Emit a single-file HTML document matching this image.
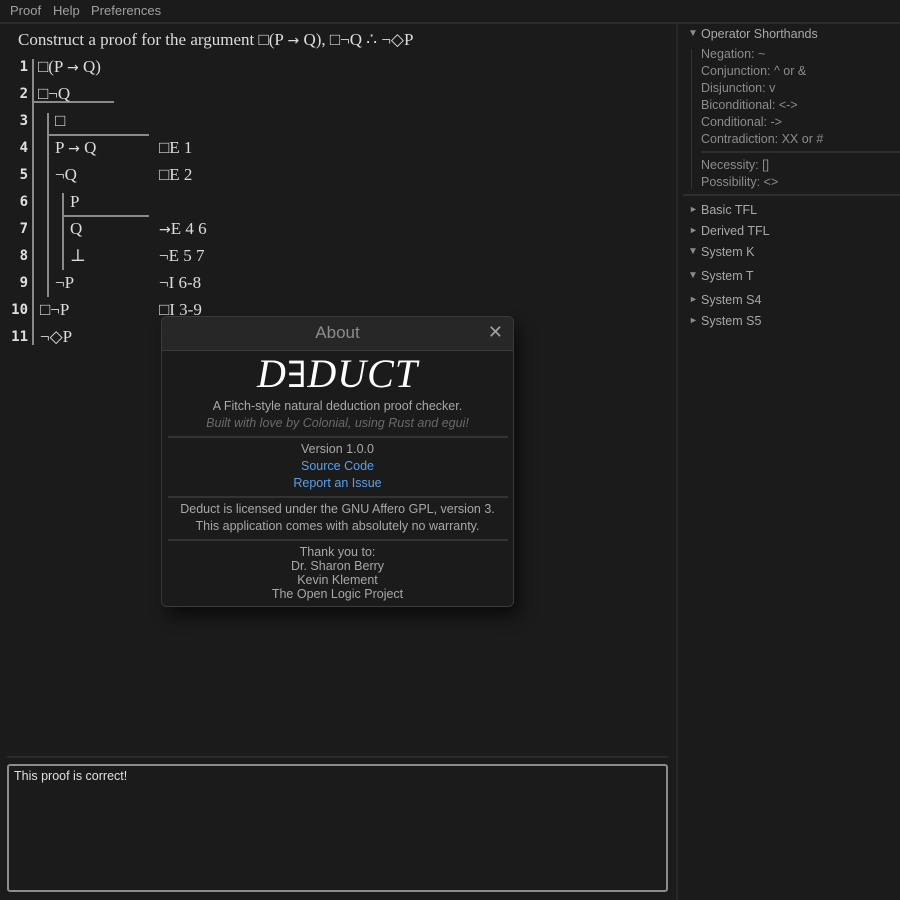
<!DOCTYPE html>
<html><head><meta charset="utf-8"><style>
*{margin:0;padding:0;box-sizing:border-box}
body{width:900px;height:900px;background:#1b1b1b;position:relative;overflow:hidden;font-family:"Liberation Sans","DejaVu Sans",sans-serif;color:#a8a8a8}
.a{position:absolute;white-space:nowrap}
.ser{font-family:"Liberation Serif","DejaVu Serif",serif;color:#dcdcdc;font-size:17px}
.ar{font-family:"DejaVu Sans",sans-serif;font-size:14px}
.num{font-family:"DejaVu Sans Mono","Liberation Mono",monospace;color:#e0e0e0;font-size:14px;font-weight:bold;text-align:right;width:24px;left:4px}
.v{position:absolute;background:#8a8a8a;width:2px}
.h{position:absolute;background:#8a8a8a;height:2px}
.ui{font-size:13px;color:#a0a0a0}
.rp div{position:absolute;font-size:12.5px;color:#8c8c8c;white-space:nowrap}
.dl{text-align:center;width:100%;position:absolute;font-size:12.5px;color:#a8a8a8}
</style></head><body>
<div class="a ui" style="left:10px;top:3px">Proof</div>
<div class="a ui" style="left:53px;top:3px">Help</div>
<div class="a ui" style="left:91px;top:3px">Preferences</div>
<div style="position:absolute;left:0;top:22px;width:900px;height:2px;background:#2c2c2c"></div>
<div style="position:absolute;left:676px;top:24px;width:2px;height:876px;background:#262626"></div>

<div class="a ser" style="left:18px;top:30px">Construct a proof for the argument □(P <span class="ar">→</span> Q), □¬Q ∴ ¬◇P</div>

<div class="a num" style="top:59px">1</div><div class="a num" style="top:86px">2</div><div class="a num" style="top:113px">3</div><div class="a num" style="top:140px">4</div><div class="a num" style="top:167px">5</div><div class="a num" style="top:194px">6</div><div class="a num" style="top:221px">7</div><div class="a num" style="top:248px">8</div><div class="a num" style="top:275px">9</div><div class="a num" style="top:302px">10</div><div class="a num" style="top:329px">11</div>

<div class="v" style="left:32px;top:59px;height:286px"></div>
<div class="h" style="left:32px;top:101px;width:82px"></div>
<div class="v" style="left:47px;top:113px;height:184px"></div>
<div class="h" style="left:47px;top:134px;width:102px"></div>
<div class="v" style="left:62px;top:193px;height:77px"></div>
<div class="h" style="left:62px;top:215px;width:87px"></div>

<div class="a ser" style="left:38px;top:57px">□(P <span class="ar">→</span> Q)</div>
<div class="a ser" style="left:38px;top:84px">□¬Q</div>
<div class="a ser" style="left:55px;top:111px">□</div>
<div class="a ser" style="left:55px;top:138px">P <span class="ar">→</span> Q</div>
<div class="a ser" style="left:55px;top:165px">¬Q</div>
<div class="a ser" style="left:70px;top:192px">P</div>
<div class="a ser" style="left:70px;top:219px">Q</div>
<div class="a ser" style="left:70px;top:246px">⊥</div>
<div class="a ser" style="left:55px;top:273px">¬P</div>
<div class="a ser" style="left:40px;top:300px">□¬P</div>
<div class="a ser" style="left:40px;top:327px">¬◇P</div>

<div class="a ser" style="left:159px;top:138px">□E 1</div>
<div class="a ser" style="left:159px;top:165px">□E 2</div>
<div class="a ser" style="left:159px;top:219px"><span class="ar">→</span>E 4 6</div>
<div class="a ser" style="left:159px;top:246px">¬E 5 7</div>
<div class="a ser" style="left:159px;top:273px">¬I 6-8</div>
<div class="a ser" style="left:159px;top:300px">□I 3-9</div>

<div style="position:absolute;left:7px;top:756px;width:661px;height:2px;background:#2a2a2a"></div>
<div style="position:absolute;left:7px;top:764px;width:661px;height:128px;border:2px solid #8c8c8c;border-radius:3px"></div>
<div class="a" style="left:14px;top:769px;font-size:12.5px;color:#e0e0e0">This proof is correct!</div>

<div class="rp">
<div style="left:688px;top:28px;font-size:10px">▼</div>
<div style="left:701px;top:27px;color:#a8a8a8">Operator Shorthands</div>
<div style="left:691px;top:49px;width:1px;height:140px;background:#333"></div>
<div style="left:701px;top:47px">Negation: ~</div>
<div style="left:701px;top:64px">Conjunction: ^ or &amp;</div>
<div style="left:701px;top:81px">Disjunction: v</div>
<div style="left:701px;top:98px">Biconditional: &lt;-&gt;</div>
<div style="left:701px;top:115px">Conditional: -&gt;</div>
<div style="left:701px;top:132px">Contradiction: XX or #</div>
<div style="left:701px;top:151px;width:199px;height:2px;background:#2e2e2e"></div>
<div style="left:701px;top:158px">Necessity: []</div>
<div style="left:701px;top:175px">Possibility: &lt;&gt;</div>
<div style="left:683px;top:194px;width:217px;height:2px;background:#2e2e2e"></div>
<div style="left:689px;top:204px;font-size:9px">►</div><div style="left:701px;top:203px;color:#a8a8a8">Basic TFL</div>
<div style="left:689px;top:225px;font-size:9px">►</div><div style="left:701px;top:224px;color:#a8a8a8">Derived TFL</div>
<div style="left:688px;top:246px;font-size:10px">▼</div><div style="left:701px;top:245px;color:#a8a8a8">System K</div>
<div style="left:688px;top:270px;font-size:10px">▼</div><div style="left:701px;top:269px;color:#a8a8a8">System T</div>
<div style="left:689px;top:294px;font-size:9px">►</div><div style="left:701px;top:293px;color:#a8a8a8">System S4</div>
<div style="left:689px;top:315px;font-size:9px">►</div><div style="left:701px;top:314px;color:#a8a8a8">System S5</div>
</div>

<div style="position:absolute;left:161px;top:316px;width:353px;height:291px;background:#1b1b1b;border:1px solid #3a3a3a;border-radius:6px;box-shadow:6px 10px 16px rgba(0,0,0,.55);overflow:hidden">
<div style="position:absolute;left:0;top:0;width:100%;height:34px;background:#272727;border-bottom:1px solid #3a3a3a"></div>
<div class="dl" style="top:6px;font-size:17px;color:#8c8c8c">About</div>
<div class="a" style="right:10px;top:5px;font-size:18px;color:#a0a0a0;font-family:'DejaVu Sans',sans-serif">✕</div>
<div class="dl" style="top:33px;font-family:'Liberation Serif',serif;font-style:italic;font-size:40px;color:#fff;letter-spacing:1px">D<span style="font-style:normal;font-family:'DejaVu Serif',serif;font-size:36px">∃</span>DUCT</div>
<div class="dl" style="top:82px">A Fitch-style natural deduction proof checker.</div>
<div class="dl" style="top:99px;font-style:italic;color:#6a6a6a">Built with love by Colonial, using Rust and egui!</div>
<div style="position:absolute;left:6px;top:119px;width:340px;height:2px;background:#333"></div>
<div class="dl" style="top:125px">Version 1.0.0</div>
<div class="dl" style="top:142px;color:#5aa0e8">Source Code</div>
<div class="dl" style="top:159px;color:#5aa0e8">Report an Issue</div>
<div style="position:absolute;left:6px;top:179px;width:340px;height:2px;background:#333"></div>
<div class="dl" style="top:185px">Deduct is licensed under the GNU Affero GPL, version 3.</div>
<div class="dl" style="top:202px">This application comes with absolutely no warranty.</div>
<div style="position:absolute;left:6px;top:222px;width:340px;height:2px;background:#333"></div>
<div class="dl" style="top:228px">Thank you to:</div>
<div class="dl" style="top:242px">Dr. Sharon Berry</div>
<div class="dl" style="top:256px">Kevin Klement</div>
<div class="dl" style="top:270px">The Open Logic Project</div>
</div>
</body></html>
